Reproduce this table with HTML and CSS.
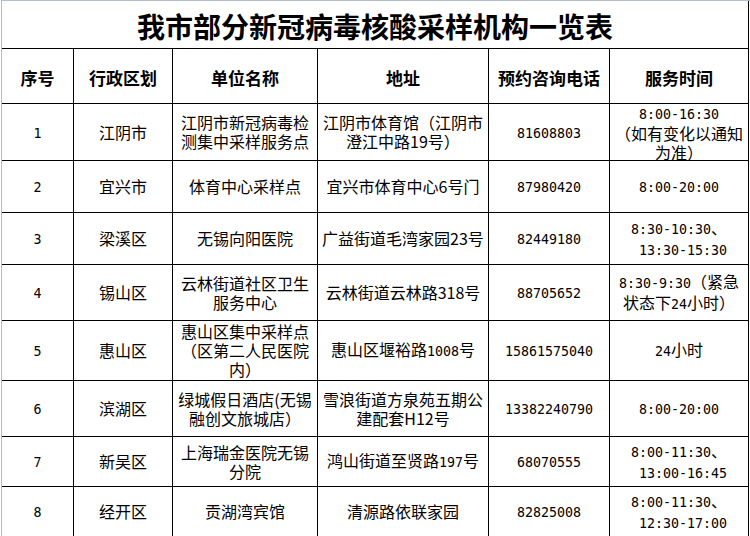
FILE: index.html
```html
<!DOCTYPE html>
<html lang="zh-CN">
<head>
<meta charset="utf-8">
<title>我市部分新冠病毒核酸采样机构一览表</title>
<link rel="stylesheet" href="styles.css">
</head>
<body>
<div class="sheet">
  <div class="grid">
    <div class="cell title"><div>我市部分新冠病毒核酸采样机构一览表</div></div>

    <div class="cell head"><div>序号</div></div>
    <div class="cell head"><div>行政区划</div></div>
    <div class="cell head"><div>单位名称</div></div>
    <div class="cell head"><div>地址</div></div>
    <div class="cell head"><div>预约咨询电话</div></div>
    <div class="cell head"><div>服务时间</div></div>

    <div class="cell"><div><span class="n">1</span></div></div>
    <div class="cell"><div>江阴市</div></div>
    <div class="cell"><div>江阴市新冠病毒检<br>测集中采样服务点</div></div>
    <div class="cell"><div>江阴市体育馆（江阴市<br>澄江中路19号）</div></div>
    <div class="cell"><div><span class="n">81608803</span></div></div>
    <div class="cell"><div><span class="n">8:00-16:30</span><br>（如有变化以通知<br>为准）</div></div>

    <div class="cell"><div><span class="n">2</span></div></div>
    <div class="cell"><div>宜兴市</div></div>
    <div class="cell"><div>体育中心采样点</div></div>
    <div class="cell"><div>宜兴市体育中心6号门</div></div>
    <div class="cell"><div><span class="n">87980420</span></div></div>
    <div class="cell"><div><span class="n">8:00-20:00</span></div></div>

    <div class="cell"><div><span class="n">3</span></div></div>
    <div class="cell"><div>梁溪区</div></div>
    <div class="cell"><div>无锡向阳医院</div></div>
    <div class="cell"><div>广益街道毛湾家园23号</div></div>
    <div class="cell"><div><span class="n">82449180</span></div></div>
    <div class="cell"><div><span class="n">8:30-10:30</span>、<br><span class="n">&nbsp;13:30-15:30</span></div></div>

    <div class="cell"><div><span class="n">4</span></div></div>
    <div class="cell"><div>锡山区</div></div>
    <div class="cell"><div>云林街道社区卫生<br>服务中心</div></div>
    <div class="cell"><div>云林街道云林路318号</div></div>
    <div class="cell"><div><span class="n">88705652</span></div></div>
    <div class="cell"><div><span class="n">8:30-9:30</span>（紧急<br>状态下<span class="n">24</span>小时）</div></div>

    <div class="cell"><div><span class="n">5</span></div></div>
    <div class="cell"><div>惠山区</div></div>
    <div class="cell"><div>惠山区集中采样点<br>（区第二人民医院<br>内）</div></div>
    <div class="cell"><div>惠山区堰裕路<span class="n">1008</span>号</div></div>
    <div class="cell"><div><span class="n">15861575040</span></div></div>
    <div class="cell"><div><span class="n">24</span>小时</div></div>

    <div class="cell"><div><span class="n">6</span></div></div>
    <div class="cell"><div>滨湖区</div></div>
    <div class="cell"><div>绿城假日酒店(无锡<br>融创文旅城店）</div></div>
    <div class="cell"><div>雪浪街道方泉苑五期公<br>建配套H12号</div></div>
    <div class="cell"><div><span class="n">13382240790</span></div></div>
    <div class="cell"><div><span class="n">8:00-20:00</span></div></div>

    <div class="cell"><div><span class="n">7</span></div></div>
    <div class="cell"><div>新吴区</div></div>
    <div class="cell"><div>上海瑞金医院无锡<br>分院</div></div>
    <div class="cell"><div>鸿山街道至贤路<span class="n">197</span>号</div></div>
    <div class="cell"><div><span class="n">68070555</span></div></div>
    <div class="cell"><div><span class="n">8:00-11:30</span>、<br><span class="n">&nbsp;13:00-16:45</span></div></div>

    <div class="cell"><div><span class="n">8</span></div></div>
    <div class="cell"><div>经开区</div></div>
    <div class="cell"><div>贡湖湾宾馆</div></div>
    <div class="cell"><div>清源路依联家园</div></div>
    <div class="cell"><div><span class="n">82825008</span></div></div>
    <div class="cell"><div><span class="n">8:00-11:30</span>、<br><span class="n">&nbsp;12:30-17:00</span></div></div>
  </div>
</div>
</body>
</html>
```

FILE: styles.css
```css
html, body {
  margin: 0;
  padding: 0;
  background: #ffffff;
}

body {
  width: 750px;
  height: 536px;
  overflow: hidden;
  font-family: "Noto Sans CJK SC", "Noto Sans", sans-serif;
  color: #000000;
}

.sheet {
  border-top: 1px solid #b4bccd;
  margin-left: 1px;
  border-left: 1px solid #b4bccd;
  width: 748px;
}

.grid {
  display: grid;
  grid-template-columns: 72px 99px 145px 171px 121px 139px;
  grid-template-rows: 48px 55px 57px 52px 52px 56px 60px 56px 50px 50px;
}

.cell {
  box-sizing: border-box;
  border-right: 1px solid #000000;
  border-bottom: 1px solid #000000;
  display: flex;
  align-items: center;
  justify-content: center;
  text-align: center;
  font-size: 16px;
  line-height: 19px;
  font-weight: 400;
  white-space: nowrap;
  overflow: visible;
}

.title {
  grid-column: 1 / -1;
  font-size: 28px;
  line-height: 32px;
  font-weight: 700;
  padding-top: 3px;
}

.head {
  font-size: 17px;
  font-weight: 700;
  padding-top: 2px;
}

.n {
  font-family: "DejaVu Sans Mono", "Liberation Mono", monospace;
  font-size: 13.3px;
}
```
